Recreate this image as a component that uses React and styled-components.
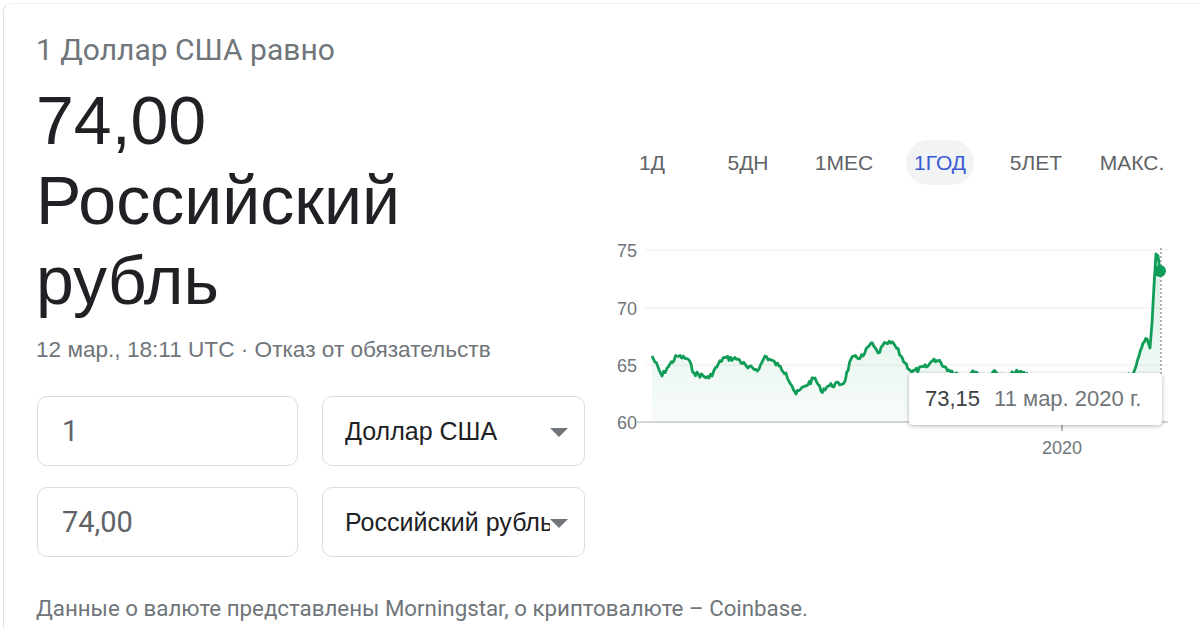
import styled, { createGlobalStyle } from 'styled-components';

const GlobalStyle = createGlobalStyle`
  html, body {
    margin: 0;
    padding: 0;
    background: #fff;
  }
  body {
    overflow: hidden;
    font-family: "Liberation Sans", Arial, sans-serif;
  }
`;

const GREEN = '#0f9d58';
const GRAY = '#70757a';

// chart anchors in page pixels (x, y)
const anchors = [
  [652, 356], [662, 376], [667, 368], [677, 356], [688, 359], [694, 373],
  [709, 378], [723, 358], [738, 359], [748, 368], [759, 369], [765, 356],
  [779, 366], [786, 373], [792, 386], [796, 394], [805, 386], [815, 378],
  [821, 391], [828, 386], [844, 383], [851, 359], [863, 356], [871, 343],
  [878, 353], [886, 343], [894, 344], [901, 356], [905, 363], [912, 372],
  [928, 366], [934, 359], [941, 363], [949, 370], [962, 376], [976, 372],
  [985, 378], [993, 372], [1005, 377], [1018, 372], [1040, 378], [1060, 376],
  [1080, 380], [1100, 377], [1120, 379], [1133, 374], [1135, 369], [1139, 356],
  [1143, 343], [1147, 339], [1150, 348], [1152, 323], [1154, 286], [1156, 254],
  [1158, 256], [1160, 271],
];

const buildLine = () => {
  let seed = 7;
  const rand = () => {
    seed = (seed * 9301 + 49297) % 233280;
    return seed / 233280;
  };
  const pts = [];
  for (let i = 0; i < anchors.length - 1; i++) {
    const [x0, y0] = anchors[i];
    const [x1, y1] = anchors[i + 1];
    const steps = Math.max(1, Math.round((x1 - x0) / 1.5));
    for (let s = 0; s < steps; s++) {
      const t = s / steps;
      const jitter = s === 0 || x1 - x0 < 4 ? 0 : (rand() - 0.5) * 5;
      pts.push([x0 + (x1 - x0) * t, y0 + (y1 - y0) * t + jitter]);
    }
  }
  pts.push(anchors[anchors.length - 1]);
  return pts;
};

const linePts = buildLine();
const linePath = linePts.map(([x, y], i) => `${i ? 'L' : 'M'}${x.toFixed(1)} ${y.toFixed(1)}`).join(' ');
const areaPath = `${linePath} L1160 422 L652 422 Z`;

const ranges = ['1Д', '5ДН', '1МЕС', '1ГОД', '5ЛЕТ', 'МАКС.'];
const yLabels = [
  { v: '75', y: 250 },
  { v: '70', y: 308 },
  { v: '65', y: 365 },
  { v: '60', y: 422 },
];

const Chart = () => (
  <ChartWrap>
    <svg width="576" height="230" viewBox="604 235 576 230">
      <defs>
        <linearGradient id="area" x1="0" y1="0" x2="0" y2="1">
          <stop offset="0%" stopColor={GREEN} stopOpacity="0.16" />
          <stop offset="100%" stopColor={GREEN} stopOpacity="0.03" />
        </linearGradient>
      </defs>
      {yLabels.slice(0, 3).map((l) => (
        <line key={l.v} x1="645" x2="1168" y1={l.y} y2={l.y} stroke="#ececec" strokeWidth="1" />
      ))}
      <path d={areaPath} fill="url(#area)" />
      <line x1="637" x2="1168" y1="422" y2="422" stroke="#c4c7c5" strokeWidth="1.5" />
      <line x1="1062" x2="1062" y1="422" y2="431" stroke="#9aa0a6" strokeWidth="1.5" />
      <line x1="1161" x2="1161" y1="248" y2="422" stroke="#80868b" strokeWidth="1.2" strokeDasharray="2 2" />
      <path d={linePath} fill="none" stroke={GREEN} strokeWidth="2.8" strokeLinejoin="round" />
      <circle cx="1160" cy="271" r="6" fill={GREEN} />
      {yLabels.map((l) => (
        <AxisText key={l.v} x="617" y={l.y + 7}>{l.v}</AxisText>
      ))}
      <AxisText x="1062" y="454" textAnchor="middle">2020</AxisText>
    </svg>
    <Tooltip>
      <TipValue>73,15</TipValue>
      <TipDate>11 мар. 2020 г.</TipDate>
    </Tooltip>
  </ChartWrap>
);

const App = () => (
  <Page>
    <GlobalStyle />
    <Card>
      <LeftColumn>
        <Heading>1 Доллар США равно</Heading>
        <Result>
          74,00
          <br />
          Российский рубль
        </Result>
        <Meta>12 мар., 18:11 UTC · Отказ от обязательств</Meta>
        <Converter>
          <Field>
            <FieldValue>1</FieldValue>
          </Field>
          <Select>
            <SelectLabel>Доллар США</SelectLabel>
            <Caret />
          </Select>
          <Field>
            <FieldValue>74,00</FieldValue>
          </Field>
          <Select>
            <SelectLabel>Российский рубль</SelectLabel>
            <Caret />
          </Select>
        </Converter>
        <Footer>Данные о валюте представлены Morningstar, о криптовалюте – Coinbase.</Footer>
      </LeftColumn>
      <RightColumn>
        <Tabs>
          {ranges.map((r) => (
            <Tab key={r}>
              <TabLabel $active={r === '1ГОД'}>{r}</TabLabel>
            </Tab>
          ))}
        </Tabs>
        <Chart />
      </RightColumn>
    </Card>
  </Page>
);

const Page = styled.div`
  width: 100vw;
  height: 100vh;
  padding: 3px 0 0 3px;
  box-sizing: border-box;
  overflow: hidden;
`;

const Card = styled.div`
  width: 1240px;
  height: 680px;
  border: 1px solid #dfe1e5;
  border-top-color: #f1f1f1;
  border-radius: 8px;
  display: flex;
  gap: 20px;
  padding: 28px 0 0 32px;
  box-sizing: border-box;
`;

const LeftColumn = styled.div`
  width: 548px;
  display: flex;
  flex-direction: column;
`;

const Heading = styled.div`
  font-family: Roboto, "Liberation Sans", sans-serif;
  font-size: 30px;
  line-height: 36px;
  color: ${GRAY};
`;

const Result = styled.div`
  margin-top: 12px;
  font-size: 68px;
  line-height: 80px;
  color: #202124;
`;

const Meta = styled.div`
  margin-top: 16px;
  font-size: 22.6px;
  line-height: 28px;
  color: ${GRAY};
  white-space: nowrap;
`;

const Converter = styled.div`
  margin-top: 32px;
  display: grid;
  grid-template-columns: 261px 263px;
  column-gap: 24px;
  row-gap: 21px;
  margin-left: 1px;
`;

const Box = styled.div`
  height: 70px;
  border: 1px solid #dadce0;
  border-radius: 10px;
  box-sizing: border-box;
  display: flex;
  align-items: center;
`;

const Field = styled(Box)`
  padding-left: 24px;
`;

const FieldValue = styled.span`
  font-family: Roboto, "Liberation Sans", sans-serif;
  font-size: 29px;
  color: #5f6368;
`;

const Select = styled(Box)`
  padding: 0 16px 0 22px;
`;

const SelectLabel = styled.span`
  flex: 1;
  min-width: 0;
  overflow: hidden;
  white-space: nowrap;
  font-size: 25px;
  color: #202124;
`;

const Caret = styled.span`
  width: 0;
  height: 0;
  border-left: 9px solid transparent;
  border-right: 9px solid transparent;
  border-top: 9px solid ${GRAY};
  margin-top: 2px;
`;

const Footer = styled.div`
  margin-top: 37px;
  font-family: Roboto, "Liberation Sans", sans-serif;
  font-size: 22.3px;
  line-height: 28px;
  color: ${GRAY};
  white-space: nowrap;
`;

const RightColumn = styled.div`
  width: 576px;
  display: flex;
  flex-direction: column;
  padding-top: 108px;
`;

const Tabs = styled.div`
  display: grid;
  grid-template-columns: repeat(6, 96px);
  height: 45px;
  align-items: center;
`;

const Tab = styled.div`
  display: flex;
  justify-content: center;
`;

const TabLabel = styled.span`
  font-size: 21px;
  line-height: 45px;
  padding: 0 8px;
  border-radius: 23px;
  color: ${({ $active }) => ($active ? '#3b5bd6' : '#5f6368')};
  background: ${({ $active }) => ($active ? '#f1f3f4' : 'transparent')};
`;

const ChartWrap = styled.div`
  position: relative;
  margin-top: 50px;
  width: 576px;
  height: 230px;
`;

const AxisText = styled.text`
  font-family: "Liberation Sans", Arial, sans-serif;
  font-size: 18px;
  fill: ${GRAY};
`;

const Tooltip = styled.div`
  position: absolute;
  left: 305px;
  top: 138px;
  width: 253px;
  height: 52px;
  box-sizing: border-box;
  background: #fff;
  border-radius: 4px;
  box-shadow: 0 1px 4px rgba(0, 0, 0, 0.3);
  display: flex;
  align-items: center;
  padding-left: 16px;
  gap: 14px;
  font-size: 22px;
  white-space: nowrap;
`;

const TipValue = styled.span`
  color: #3c4043;
`;

const TipDate = styled.span`
  color: ${GRAY};
`;

export default App;
